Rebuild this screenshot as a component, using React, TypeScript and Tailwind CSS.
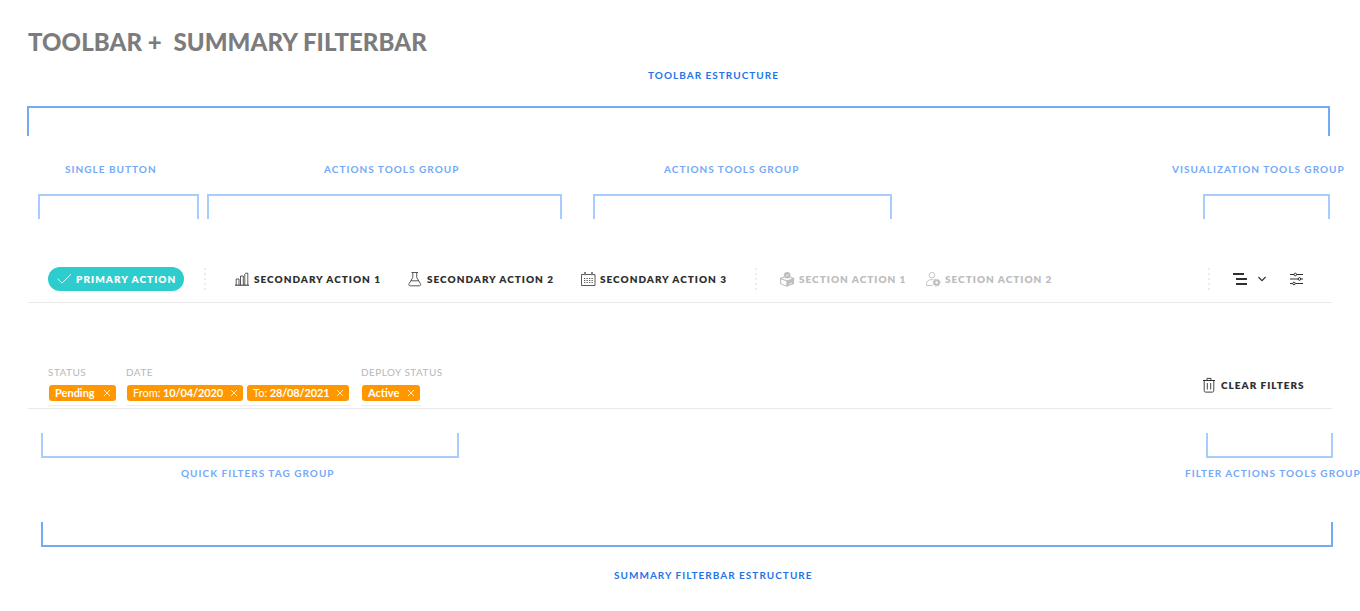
import type { ReactNode } from "react";

function Label({ className, children }: { className: string; children: ReactNode }) {
  return (
    <div className={`shrink-0 whitespace-nowrap text-[10px] font-bold leading-3 tracking-[1.02px] ${className}`}>
      {children}
    </div>
  );
}

function Dots({ className }: { className: string }) {
  return (
    <div className={`flex shrink-0 flex-col gap-[3px] ${className}`}>
      {[0, 1, 2, 3, 4].map((i) => (
        <span key={i} className="size-[2px] bg-[#ececec]" />
      ))}
    </div>
  );
}

function Action({ icon, className, children }: { icon: ReactNode; className: string; children: ReactNode }) {
  return (
    <button className={`flex shrink-0 items-center whitespace-nowrap text-[10px] font-extrabold leading-4 tracking-[1px] ${className}`}>
      {icon}
      {children}
    </button>
  );
}

function Tag({ prefix, value, className }: { prefix?: string; value: string; className: string }) {
  return (
    <span className={`flex h-4 shrink-0 items-center whitespace-nowrap rounded-[3px] bg-[#ff9800] pl-1.5 text-[11px] leading-4 text-white ${className}`}>
      {prefix && <span className="mr-[2.5px]">{prefix}</span>}
      <span className={prefix ? "font-bold tracking-[-0.14px]" : "font-bold"}>{value}</span>
      <svg className="ml-auto mr-[5px] size-2" viewBox="0 0 8 8" fill="none" stroke="currentColor" strokeWidth="0.8">
        <path d="M1 1l6 6M7 1L1 7" />
      </svg>
    </span>
  );
}

function FilterGroup({ title, className, children }: { title: string; className: string; children: ReactNode }) {
  return (
    <div className={`shrink-0 ${className}`}>
      <div className="whitespace-nowrap text-[10px] leading-3 tracking-[0.46px] text-[#b8b8b8]">{title}</div>
      <div className="mt-[7px] flex h-[21px] gap-1 border-b border-[#eeeeee] pl-px">{children}</div>
    </div>
  );
}

const BarsIcon = () => (
  <svg className="mr-[5px] mt-px h-[15px] w-[14px] shrink-0" viewBox="0 0 14 15" fill="none" stroke="currentColor" strokeWidth="0.8">
    <path d="M0 13.200h14" strokeWidth="1" />
    <path d="M1.200 13V7h2.800V13M5.500 13V4h2.800V13M9.800 13V2.200l1-1h2V13" />
  </svg>
);

const FlaskIcon = () => (
  <svg className="-ml-px mr-[5px] mt-px size-[15px] shrink-0" viewBox="0 0 15 15" fill="none" stroke="currentColor" strokeWidth="0.8">
    <path d="M4.500.5h6.500M5.800.7v4.800L2 11.800c-.6 1 .1 2 1 2h9.500c.9 0 1.600-1 1-2L9.700 5.500V.7M4 8.800h7.500" />
  </svg>
);

const CalendarIcon = () => (
  <svg className="mr-1 mt-px size-[15px] shrink-0" viewBox="0 0 15 15" fill="none" stroke="currentColor" strokeWidth="0.8">
    <path d="M3 2.500H.5v11h13.500v-11H12M5 2.500h5" />
    <path d="M4 0v3.200M11 0v3.200" strokeWidth="1.200" />
    <path d="M3 6.500h9.500M3 8.500h9.500M3 10.500h9.500" strokeDasharray="1.3 1.2" strokeWidth="0.800" />
  </svg>
);

const BoxIcon = () => (
  <svg className="mr-1 mt-px size-[15px] shrink-0" viewBox="0 0 15 15" fill="none" stroke="currentColor" strokeWidth="1.100">
    <circle cx="7.2" cy="3.2" r="3.2" fill="currentColor" stroke="none" />
    <path d="M5.800 3l1.200 1.200L8.700 2.400" stroke="white" strokeWidth="0.8" />
    <path d="M4.100 5L.5 6.500v5.200l6.400 2.500V9L.5 6.500M6.900 9l6.700-2.500-3.300-1.500" />
    <path d="M7.100 9l7-2.600v5.500l-7 2.600z" fill="currentColor" stroke="none" />
    <path d="M9.200 12.100l2.700-1" stroke="white" strokeWidth="0.8" />
  </svg>
);

const UserGearIcon = () => (
  <svg className="mr-1 mt-px size-[15px] shrink-0" viewBox="0 0 15 15" fill="none" stroke="currentColor" strokeWidth="0.9">
    <circle cx="5.900" cy="3.200" r="2.800" />
    <path d="M7.700 8c-.6-.3-1.200-.4-2-.4h-.5C2.300 7.600.5 9.500.5 12.200v1.300h6" />
    <circle cx="10.600" cy="10.600" r="2.200" strokeWidth="1.900" />
    <circle cx="10.600" cy="10.600" r="3.350" strokeWidth="1.200" strokeDasharray="1.316 1.315" />
  </svg>
);

const TrashIcon = () => (
  <svg className="mr-[6px] h-4 w-3 shrink-0" viewBox="0 0 12 16" fill="none" stroke="currentColor" strokeWidth="0.9">
    <path d="M0 3.500h12" strokeWidth="1" />
    <path d="M4 3.200V1.400h4v1.800M1.200 4v9.600c0 .9.500 1.500 1.300 1.500h7c.8 0 1.300-.6 1.300-1.500V4M4.300 6v6.500M7.700 6v6.500" />
  </svg>
);

export default function App() {
  return (
    <main className="h-[611px] w-[1360px] overflow-hidden bg-white font-['Lato',sans-serif] text-[#2f2f2f]">
      <h1 className="h-[70px] whitespace-pre pl-7 pt-[26px] text-[24px] font-black leading-8 tracking-[0.08px] text-[#7c7c7c]">
        {"TOOLBAR +  SUMMARY FILTERBAR"}
      </h1>
      <Label className="-mt-px h-[37px] pl-[648px] text-[#1f75e8]">TOOLBAR ESTRUCTURE</Label>
      <div className="ml-[27px] h-[30px] w-[1303px] border-2 border-b-0 border-[#74a9f7]" />

      <div className="flex h-[58px] pt-[27px] text-[#74a9f7]">
        <Label className="ml-[65px] w-[259px]">SINGLE BUTTON</Label>
        <Label className="w-[340px]">ACTIONS TOOLS GROUP</Label>
        <Label className="w-[508px]">ACTIONS TOOLS GROUP</Label>
        <Label className="">VISUALIZATION TOOLS GROUP</Label>
      </div>
      <div className="flex h-[25px]">
        <div className="ml-[38px] w-[161px] border-2 border-b-0 border-[#a9ccff]" />
        <div className="ml-2 w-[355px] border-2 border-b-0 border-[#a9ccff]" />
        <div className="ml-[31px] w-[299px] border-2 border-b-0 border-[#a9ccff]" />
        <div className="ml-[311px] w-[127px] border-2 border-b-0 border-[#a9ccff]" />
      </div>

      <div className="ml-7 mt-9 flex h-12 w-[1304px] items-center border-b border-[#e9e9e9] pt-px">
        <button className="ml-5 flex h-6 w-[136px] shrink-0 items-center gap-1 whitespace-nowrap rounded-full bg-[#2dcccd] pl-[9px] text-[10px] font-extrabold leading-4 tracking-[1.04px] text-white">
          <svg className="h-4 w-[15px] shrink-0" viewBox="0 0 15 16" fill="none" stroke="currentColor" strokeWidth="0.9">
            <path d="M.7 7.800l4.300 4.300 9-8.800" />
          </svg>
          PRIMARY ACTION
        </button>
        <Dots className="ml-5 w-[31px]" />
        <Action className="w-[173px]" icon={<BarsIcon />}>SECONDARY ACTION 1</Action>
        <Action className="w-[173px]" icon={<FlaskIcon />}>SECONDARY ACTION 2</Action>
        <Action className="w-[174px]" icon={<CalendarIcon />}>SECONDARY ACTION 3</Action>
        <Dots className="w-[25px]" />
        <Action className="w-[146px] text-[#bdbdbd]" icon={<BoxIcon />}>SECTION ACTION 1</Action>
        <Action className="text-[#bdbdbd]" icon={<UserGearIcon />}>SECTION ACTION 2</Action>
        <div className="ml-auto flex w-[124px] items-center">
          <Dots className="w-[25px]" />
          <svg className="h-[14px] w-[14px]" viewBox="0 0 14 14" stroke="currentColor" strokeWidth="2">
            <path d="M0 2h11M3 7h11M3 12h11" />
          </svg>
          <svg className="ml-[11px] h-1.5 w-2" viewBox="0 0 8 6" fill="none" stroke="currentColor" strokeWidth="1.100">
            <path d="M.4 1l3.600 3.700L7.600 1" />
          </svg>
          <svg className="ml-[24px] h-[14px] w-[13px]" viewBox="0 0 13 14" fill="white" stroke="currentColor">
            <path d="M0 2.500h13M0 7h13M0 11.500h13" />
            <circle cx="5.300" cy="2.500" r="1.300" />
            <circle cx="9.500" cy="7" r="1.300" />
            <circle cx="4" cy="11.500" r="1.300" />
          </svg>
        </div>
      </div>

      <div className="ml-7 mt-[63px] flex h-[43px] w-[1304px] border-b border-[#e9e9e9]">
        <FilterGroup title="STATUS" className="ml-5 w-[69px]">
          <Tag value="Pending" className="w-[67px]" />
        </FilterGroup>
        <FilterGroup title="DATE" className="ml-[9px] w-[225px]">
          <Tag prefix="From:" value="10/04/2020" className="w-[116px]" />
          <Tag prefix="To:" value="28/08/2021" className="w-[102px]" />
        </FilterGroup>
        <FilterGroup title="DEPLOY STATUS" className="ml-[10px] w-[60px]">
          <Tag value="Active" className="w-[58px]" />
        </FilterGroup>
        <Action className="ml-auto mr-[11px] mt-[11px] h-4 w-[118px]" icon={<TrashIcon />}>CLEAR FILTERS</Action>
      </div>

      <div className="mt-6 flex h-[25px]">
        <div className="ml-[41px] w-[418px] border-2 border-t-0 border-[#a9ccff]" />
        <div className="ml-[747px] w-[127px] border-2 border-t-0 border-[#a9ccff]" />
      </div>
      <div className="flex h-16 pt-[9px] text-[#74a9f7]">
        <Label className="ml-[181px] w-[1004px]">QUICK FILTERS TAG GROUP</Label>
        <Label className="">FILTER ACTIONS TOOLS GROUP</Label>
      </div>
      <div className="ml-[41px] h-[25px] w-[1292px] border-2 border-t-0 border-[#74a9f7]" />
      <Label className="pl-[614px] pt-[22px] text-[#1f75e8]">SUMMARY FILTERBAR ESTRUCTURE</Label>
    </main>
  );
}
